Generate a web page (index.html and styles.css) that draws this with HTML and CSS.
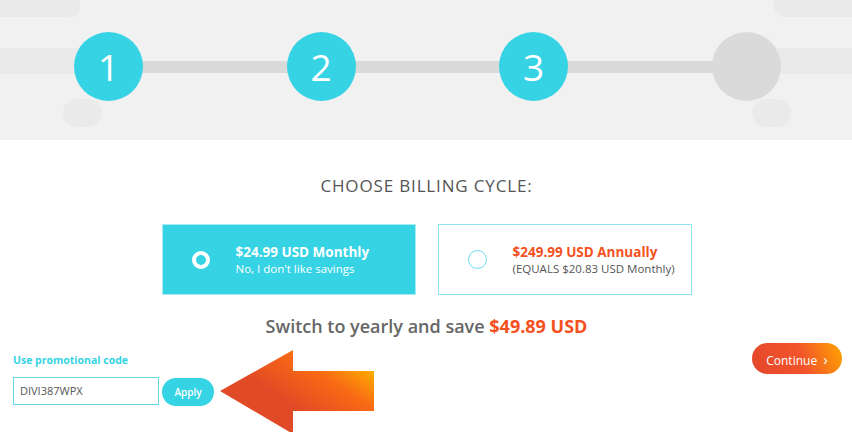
FILE: index.html
```html
<html>
	<head>
	<meta name="viewport" content="width=device-width, initial-scale=1">
	<title>Billing cycle</title>
	<link rel="stylesheet" href="styles.css">
	</head>
	<body>
	<div class="steps">
		<div class="deco deco_tl"></div>
		<div class="deco deco_tr"></div>
		<div class="deco band_l"></div>
		<div class="deco band_r"></div>
		<div class="deco pill_l"></div>
		<div class="deco pill_r"></div>
		<div class="track"></div>
		<div class="step_row">
			<div class="step done">1</div>
			<div class="step done">2</div>
			<div class="step done">3</div>
			<div class="step"></div>
		</div>
	</div>

	<div class="billing">
		<h2 class="title">CHOOSE BILLING CYCLE:</h2>
		<div class="plans">
			<div class="plan active">
				<span class="radio"></span>
				<div>
					<div class="plan_price">$24.99 USD Monthly</div>
					<div class="plan_note">No, I don't like savings</div>
				</div>
			</div>
			<div class="plan">
				<span class="radio"></span>
				<div>
					<div class="plan_price orange">$249.99 USD Annually</div>
					<div class="plan_note">(EQUALS $20.83 USD Monthly)</div>
				</div>
			</div>
		</div>
		<p class="save">Switch to yearly and save <b class="orange">$49.89 USD</b></p>
	</div>

	<div class="bottom">
		<div class="promo">
			<div class="promo_label">Use promotional code</div>
			<div class="promo_row">
				<input class="promo_input" type="text" value="DIVI387WPX">
				<button class="apply">Apply</button>
			</div>
			<svg class="arrow" width="156" height="84" viewBox="0 0 156 84">
				<defs>
					<linearGradient id="arrowGrad" x1="0.45" y1="0.65" x2="1" y2="0.2">
						<stop offset="0" stop-color="#e04a26"/>
						<stop offset="0.55" stop-color="#f86a14"/>
						<stop offset="1" stop-color="#ffb400"/>
					</linearGradient>
				</defs>
				<polygon points="0,41 73,0 73,21 154,21 154,61 73,61 73,84" fill="url(#arrowGrad)"/>
			</svg>
		</div>
		<button class="continue">Continue <span class="chev">&#8250;</span></button>
	</div>
	</body>
</html>
```

FILE: styles.css
```css
body{
	margin: 0;
	font-family: "Open Sans", sans-serif;
	background: #fff;
	color: #555;
}

.steps{
	position: relative;
	height: 140px;
	background: #f1f1f1;
	overflow: hidden;
}
.deco{position: absolute; background: #eaeaea;}
.deco_tl{left: 0; top: 0; width: 80px; height: 17px; border-radius: 0 0 10px 0;}
.deco_tr{right: 0; top: 0; width: 78px; height: 17px; border-radius: 0 0 0 10px;}
.band_l{left: 0; top: 48px; width: 110px; height: 26px;}
.band_r{right: 0; top: 48px; width: 110px; height: 26px;}
.pill_l{left: 63px; top: 99px; width: 39px; height: 28px; border-radius: 14px;}
.pill_r{left: 752px; top: 99px; width: 39px; height: 28px; border-radius: 14px;}
.track{
	position: absolute;
	left: 110px; top: 61px;
	width: 636px; height: 12px;
	background: #dadada;
}

.step_row{
	position: relative;
	display: flex;
	gap: 143.5px;
	padding: 32px 0 0 74px;
}
.step{
	width: 69px;
	height: 69px;
	border-radius: 50%;
	background: #dadada;
	color: #fff;
	font-size: 37px;
	font-weight: 400;
	line-height: 69px;
	text-align: center;
	flex: none;
}
.step.done{background: #36d3e5;}

.billing{text-align: center; padding-left: 1px;}
.title{
	margin: 36px 0 0;
	font-size: 17px;
	line-height: 20px;
	font-weight: 500;
	color: #555;
	letter-spacing: 0.85px;
}
.plans{
	display: flex;
	justify-content: center;
	gap: 22px;
	margin-top: 28px;
}
.plan{
	box-sizing: border-box;
	width: 254px;
	height: 71px;
	display: flex;
	align-items: center;
	gap: 26px;
	padding-left: 29px;
	border: 1px solid #8be4ef;
	background: #fff;
	text-align: left;
}
.plan.active{background: #36d3e5; border-color: #a6ecf4;}
.radio{
	box-sizing: border-box;
	width: 19px;
	height: 19px;
	border-radius: 50%;
	border: 1px solid #6fdcea;
	flex: none;
}
.active .radio{border: 4px solid #fff; width: 18px; height: 18px;}
.plan_price{font-size: 13.5px; font-weight: 700; line-height: 17px; color: #555;}
.plan_note{font-size: 11.5px; line-height: 15px; color: #555;}
.active .plan_price, .active .plan_note{color: #fff;}
.orange{color: #f4511e;}
.active .plan_price.orange{color: #fff;}

.save{
	margin: 20px 0 0;
	font-size: 18px;
	line-height: 22px;
	font-weight: 600;
	color: #666;
}
.save b{font-weight: 700;}

.bottom{
	display: flex;
	justify-content: space-between;
	align-items: flex-start;
	padding: 6px 10px 0 13px;
}
.promo{position: relative; padding-top: 10px;}
.promo_label{
	font-size: 10.5px;
	line-height: 14px;
	font-weight: 700;
	color: #36d3e5;
}
.promo_row{
	display: flex;
	align-items: center;
	gap: 3px;
	margin-top: 8px;
}
.promo_input{
	box-sizing: border-box;
	width: 146px;
	height: 28px;
	border: 1px solid #5fd9e8;
	padding: 0 6px;
	font-family: "Open Sans", sans-serif;
	font-size: 11px;
	color: #555;
	outline: none;
}
.apply{
	width: 52px;
	height: 28px;
	margin-top: 3px;
	border: none;
	border-radius: 14px;
	background: #36d3e5;
	color: #fff;
	font-family: "Open Sans", sans-serif;
	font-size: 10px;
	font-weight: 600;
}
.arrow{position: absolute; left: 207px; top: 7px;}

.continue{
	width: 90px;
	height: 31px;
	border: none;
	border-radius: 16px;
	background: linear-gradient(70deg, #e3472b 0%, #f2552a 55%, #ffa400 100%);
	color: #fff;
	font-family: "Open Sans", sans-serif;
	font-size: 12px;
	font-weight: 500;
	padding: 0;
}
.chev{font-size: 15px; margin-left: 3px;}
```
